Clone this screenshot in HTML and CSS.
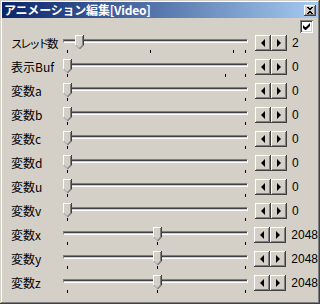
FILE: index.html
```html
<!DOCTYPE html>
<html lang="ja">
<head>
  <meta charset="UTF-8" />
  <title>アニメーション編集[Video]</title>
  <link rel="stylesheet" href="styles.css">
</head>
<body>
  <div class="window">
    <div class="titlebar">
      <span class="title">アニメーション編集[Video]</span>
      <span class="close-btn">
        <svg width="8" height="7" viewBox="0 0 8 7"><path d="M1 0h2v1h2V0h2v1h-1v1h-1v1h-1v1h1v1h1v1h1v1H5V6H3v1H1V6h1V5h1V4h1V3H3V2H2V1H1z" fill="#000"/></svg>
      </span>
    </div>

    <div class="check-row">
      <span class="checkbox">
        <svg width="7" height="7" viewBox="0 0 7 7"><path d="M7 0v3L3 7H2L0 5V2l2 2h1l4-4z" fill="#000"/></svg>
      </span>
    </div>

    <div class="rows">
      <div class="row">
        <span class="label tight">スレッド数</span>
        <div class="slider">
          <div class="track"></div>
          <span class="thumb" style="left: 12px"></span>
          <span class="tick" style="left: 4px"></span>
          <span class="tick" style="left: 87px"></span>
          <span class="tick" style="left: 170px"></span>
          <span class="tick" style="left: 182px"></span>
        </div>
        <span class="btn left"></span><span class="btn right"></span>
        <span class="value">2</span>
      </div>
      <div class="row">
        <span class="label">表示Buf</span>
        <div class="slider">
          <div class="track"></div>
          <span class="thumb" style="left: 0"></span>
          <span class="tick" style="left: 4px"></span>
          <span class="tick" style="left: 162px"></span>
          <span class="tick" style="left: 182px"></span>
        </div>
        <span class="btn left"></span><span class="btn right"></span>
        <span class="value">0</span>
      </div>
      <div class="row">
        <span class="label">変数a</span>
        <div class="slider">
          <div class="track"></div>
          <span class="thumb" style="left: 0"></span>
          <span class="tick" style="left: 4px"></span>
          <span class="tick" style="left: 182px"></span>
        </div>
        <span class="btn left"></span><span class="btn right"></span>
        <span class="value">0</span>
      </div>
      <div class="row">
        <span class="label">変数b</span>
        <div class="slider">
          <div class="track"></div>
          <span class="thumb" style="left: 0"></span>
          <span class="tick" style="left: 4px"></span>
          <span class="tick" style="left: 182px"></span>
        </div>
        <span class="btn left"></span><span class="btn right"></span>
        <span class="value">0</span>
      </div>
      <div class="row">
        <span class="label">変数c</span>
        <div class="slider">
          <div class="track"></div>
          <span class="thumb" style="left: 0"></span>
          <span class="tick" style="left: 4px"></span>
          <span class="tick" style="left: 182px"></span>
        </div>
        <span class="btn left"></span><span class="btn right"></span>
        <span class="value">0</span>
      </div>
      <div class="row">
        <span class="label">変数d</span>
        <div class="slider">
          <div class="track"></div>
          <span class="thumb" style="left: 0"></span>
          <span class="tick" style="left: 4px"></span>
          <span class="tick" style="left: 182px"></span>
        </div>
        <span class="btn left"></span><span class="btn right"></span>
        <span class="value">0</span>
      </div>
      <div class="row">
        <span class="label">変数u</span>
        <div class="slider">
          <div class="track"></div>
          <span class="thumb" style="left: 0"></span>
          <span class="tick" style="left: 4px"></span>
          <span class="tick" style="left: 182px"></span>
        </div>
        <span class="btn left"></span><span class="btn right"></span>
        <span class="value">0</span>
      </div>
      <div class="row">
        <span class="label">変数v</span>
        <div class="slider">
          <div class="track"></div>
          <span class="thumb" style="left: 0"></span>
          <span class="tick" style="left: 4px"></span>
          <span class="tick" style="left: 182px"></span>
        </div>
        <span class="btn left"></span><span class="btn right"></span>
        <span class="value">0</span>
      </div>
      <div class="row">
        <span class="label">変数x</span>
        <div class="slider">
          <div class="track"></div>
          <span class="thumb" style="left: 90px"></span>
          <span class="tick" style="left: 4px"></span>
          <span class="tick" style="left: 94px"></span>
          <span class="tick" style="left: 182px"></span>
        </div>
        <span class="btn left"></span><span class="btn right"></span>
        <span class="value">2048</span>
      </div>
      <div class="row">
        <span class="label">変数y</span>
        <div class="slider">
          <div class="track"></div>
          <span class="thumb" style="left: 90px"></span>
          <span class="tick" style="left: 4px"></span>
          <span class="tick" style="left: 94px"></span>
          <span class="tick" style="left: 182px"></span>
        </div>
        <span class="btn left"></span><span class="btn right"></span>
        <span class="value">2048</span>
      </div>
      <div class="row">
        <span class="label">変数z</span>
        <div class="slider">
          <div class="track"></div>
          <span class="thumb" style="left: 90px"></span>
          <span class="tick" style="left: 4px"></span>
          <span class="tick" style="left: 94px"></span>
          <span class="tick" style="left: 182px"></span>
        </div>
        <span class="btn left"></span><span class="btn right"></span>
        <span class="value">2048</span>
      </div>
    </div>
  </div>
</body>
</html>
```

FILE: styles.css
```css
body {
  margin: 0;
  padding: 0;
  background: #d4d0c8;
  font-family: "Noto Sans CJK JP", "Liberation Sans", sans-serif;
  font-size: 12px;
  color: #000;
}

.window {
  width: 320px;
  height: 304px;
  box-sizing: border-box;
  padding: 2px;
  background: #d4d0c8;
  box-shadow: inset -1px -1px #404040, inset 1px 1px #d4d0c8,
              inset -2px -2px #808080, inset 2px 2px #fff;
}

.titlebar {
  height: 16px;
  display: flex;
  align-items: center;
  justify-content: space-between;
  padding: 0 2px 0 2px;
  background: linear-gradient(to right, #0a246a, #a6caf0);
}

.title {
  color: #fff;
  font-weight: bold;
  font-size: 12px;
  line-height: 16px;
  letter-spacing: -0.2px;
}

.close-btn {
  width: 12px;
  height: 11px;
  box-sizing: border-box;
  display: flex;
  align-items: center;
  justify-content: center;
  background: #d4d0c8;
  box-shadow: inset -1px -1px #404040, inset 1px 1px #fff, inset -2px -2px #808080;
}

.check-row {
  height: 11px;
  padding-top: 2px;
  display: flex;
  justify-content: flex-end;
  padding-right: 5px;
}

.checkbox {
  width: 13px;
  height: 13px;
  box-sizing: border-box;
  display: flex;
  align-items: center;
  justify-content: center;
  background: #fff;
  box-shadow: inset 1px 1px #808080, inset -1px -1px #fff,
              inset 2px 2px #404040, inset -2px -2px #d4d0c8;
}

.rows {
  display: flex;
  flex-direction: column;
}

.row {
  height: 24px;
  display: flex;
  align-items: center;
}

.label {
  width: 52px;
  padding-left: 9px;
  white-space: nowrap;
  font-size: 12px;
  line-height: 14px;
}

.label.tight {
  font-size: 11.5px;
  letter-spacing: -2.5px;
}

.slider {
  position: relative;
  width: 187px;
  height: 24px;
  margin-right: 5px;
}

.track {
  margin-top: 8px;
  width: 185px;
  height: 4px;
  box-sizing: border-box;
  border-top: 1px solid #808080;
  border-left: 1px solid #808080;
  border-bottom: 1px solid #fff;
  border-right: 1px solid #fff;
  background: #404040;
  box-shadow: inset 0 -1px #d4d0c8;
}

.thumb {
  position: absolute;
  top: 4px;
  width: 9px;
  height: 14px;
  background: url("data:image/svg+xml,%3Csvg xmlns='http://www.w3.org/2000/svg' width='9' height='14'%3E%3Cpath d='M0 0h9v10l-4 4h-1l-4-4z' fill='%23404040'/%3E%3Cpath d='M0 0h8v10l-4 4l-4-4z' fill='%23fff'/%3E%3Cpath d='M1 1h7v9l-3.5 3.5h-0.5l-3-3z' fill='%23808080'/%3E%3Cpath d='M1 1h6v9l-3 3l-3-3z' fill='%23d4d0c8'/%3E%3C/svg%3E") no-repeat;
}

.tick {
  position: absolute;
  top: 19px;
  width: 1px;
  height: 3px;
  background: #000;
}

.btn {
  width: 16px;
  height: 16px;
  box-sizing: border-box;
  background: #d4d0c8;
  box-shadow: inset -1px -1px #404040, inset 1px 1px #fff, inset -2px -2px #808080;
  display: flex;
  align-items: center;
  justify-content: center;
}

.btn.left::before {
  content: "";
  border-top: 4px solid transparent;
  border-bottom: 4px solid transparent;
  border-right: 4px solid #000;
  margin-left: -1px;
}

.btn.right::before {
  content: "";
  border-top: 4px solid transparent;
  border-bottom: 4px solid transparent;
  border-left: 4px solid #000;
}

.value {
  padding-left: 5px;
  font-family: "Liberation Sans", sans-serif;
  font-size: 12px;
}
```
